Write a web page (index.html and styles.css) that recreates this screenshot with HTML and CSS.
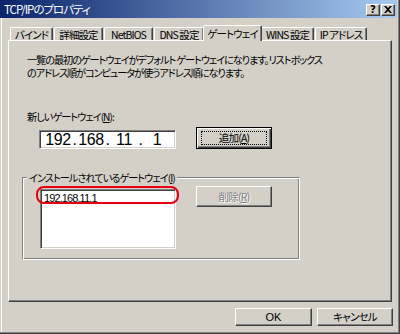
FILE: index.html
```html
<!DOCTYPE html>
<html lang="ja">
<head>
<meta charset="utf-8">
<link rel="stylesheet" href="styles.css">
</head>
<body>
<div class="window">
  <div class="titlebar">
    <span class="title">TCP/IPのプロパティ</span>
    <div class="tb-btns">
      <span class="tb-btn">?</span>
      <span class="tb-btn x">
        <svg width="8" height="7" viewBox="0 0 8 7"><path d="M0 0h2l2 2 2-2h2L5 3.5 8 7H6L4 5 2 7H0l3-3.5z" fill="#000"/></svg>
      </span>
    </div>
  </div>
  <div class="tabs">
    <div class="tab w1">バインド</div>
    <div class="tab w2">詳細設定</div>
    <div class="tab w3">NetBIOS</div>
    <div class="tab w4">DNS 設定</div>
    <div class="tab sel w5">ゲートウェイ</div>
    <div class="tab w6">WINS 設定</div>
    <div class="tab w7">IP アドレス</div>
  </div>
  <div class="panel">
    <p class="desc">一覧の最初のゲートウェイがデフォルト ゲートウェイになります。リストボックス</p>
    <p class="desc line2">のアドレス順がコンピュータが使うアドレス順になります。</p>
    <p class="label">新しいゲートウェイ(<u>N</u>):</p>
    <div class="row">
      <div class="ipbox">
        <span class="oct">192</span><span class="dot">.</span><span class="oct">168</span><span class="dot">.</span><span class="oct">11</span><span class="dot">.</span><span class="oct">1</span>
      </div>
      <div class="btn default add"><span class="focus">追加(<u>A</u>)</span></div>
    </div>
    <div class="group">
      <span class="legend">インストールされているゲートウェイ(<u>I</u>)</span>
      <div class="grow">
        <div class="listbox">
          <div class="item">192.168.11.1</div>
          <div class="mark"></div>
        </div>
        <div class="btn disabled del">削除(<u>R</u>)</div>
      </div>
    </div>
  </div>
  <div class="footer">
    <div class="btn ok">OK</div>
    <div class="btn cancel">キャンセル</div>
  </div>
</div>
</body>
</html>
```

FILE: styles.css
```css
* { box-sizing: border-box; }
html, body { margin: 0; padding: 0; }
body {
  width: 400px; height: 334px; overflow: hidden;
  background: #d4d0c8;
  font-family: "Noto Sans CJK JP", "Noto Sans", sans-serif;
  font-size: 10px;
  font-feature-settings: "palt";
  letter-spacing: -0.9px;
  color: #000;
}
u { text-decoration: underline; text-underline-offset: 1px; }
p { margin: 0; }

.window {
  width: 400px; height: 334px;
  background: #d4d0c8;
  box-shadow: inset -1px -1px #404040, inset -2px -2px #808080, inset 1px 0 #d4d0c8, inset 2px 0 #fff;
  display: flex; flex-direction: column;
}

.titlebar {
  height: 18px; width: 397px;
  background: linear-gradient(to right, #0a246a, #a6caf0);
  display: flex; align-items: center; justify-content: space-between;
  padding: 0 2px 0 4px;
}
.title { color: #fff; font-size: 11.5px; line-height: 14px; letter-spacing: -1px; }
.tb-btns { display: flex; gap: 1px; margin-top: 1px; }
.tb-btn {
  width: 14px; height: 12px;
  background: #d4d0c8;
  border: 1px solid; border-color: #fff #404040 #404040 #fff;
  box-shadow: inset -1px -1px #808080;
  font-family: "DejaVu Sans", sans-serif; font-weight: bold; font-size: 10px; line-height: 9px;
  letter-spacing: 0;
  display: flex; align-items: center; justify-content: center;
}

.tabs {
  height: 22px;
  display: flex; align-items: flex-end;
  padding-left: 10px;
}
.tab {
  height: 13px;
  margin-right: 1px;
  border: 1px solid; border-bottom: 0;
  border-color: #fff #404040 transparent #fff;
  border-radius: 2px 2px 0 0;
  box-shadow: inset -1px 0 #808080;
  font-size: 10.5px; line-height: 13px;
  text-align: center;
  letter-spacing: -0.9px;
  white-space: nowrap;
}
.tab.sel {
  position: relative; z-index: 1;
  height: 16px;
  margin: 0 -1px -1px -2px;
  background: #d4d0c8;
  padding-top: 1px;
}
.w1 { width: 43px; }
.w2 { width: 49px; }
.w3 { width: 49px; }
.w4 { width: 50px; }
.w5 { width: 59px; }
.w6 { width: 53px; }
.w7 { width: 52px; }

.panel {
  margin-left: 8px;
  width: 384px; height: 262px;
  border: 1px solid; border-color: #fff #404040 #404040 #fff;
  box-shadow: inset -1px -1px #808080;
}
.desc {
  margin: 12px 0 0 18px;
  height: 13px;
  font-size: 10.2px;
  line-height: 13px;
  letter-spacing: -1.1px;
  white-space: nowrap;
}
.desc.line2 { margin-top: 0; }
.label {
  margin: 31px 0 0 18px;
  font-size: 10.2px;
  line-height: 13px;
  letter-spacing: -1px;
}
.row {
  display: flex; align-items: flex-start;
  margin: 4px 0 0 30px;
  height: 22px;
}
.ipbox {
  width: 137px; height: 19px; margin-top: 3px;
  background: #fff;
  border: 1px solid; border-color: #808080 #fff #fff #808080;
  box-shadow: inset 1px 1px #404040, inset -1px -1px #d4d0c8;
  display: flex; align-items: center; padding-left: 4px;
  font-family: "Liberation Sans", sans-serif; font-size: 16px; line-height: 16px;
  letter-spacing: -0.4px;
}
.oct { width: 28px; text-align: center; }
.dot { width: 5px; text-align: center; }

.btn {
  background: #d4d0c8;
  border: 1px solid; border-color: #fff #404040 #404040 #fff;
  box-shadow: inset -1px -1px #808080;
  display: flex; align-items: center; justify-content: center;
  font-size: 10.5px; line-height: 12px; letter-spacing: -0.8px;
  white-space: nowrap;
}
.btn.default {
  border: 1px solid #000;
  box-shadow: inset 1px 1px #fff, inset -1px -1px #404040, inset -2px -2px #808080;
}
.focus {
  display: flex; align-items: center; justify-content: center;
  width: 66px; height: 14px;
  border: 1px dotted #000;
}
.add { width: 76px; height: 22px; margin-left: 20px; }

.group {
  position: relative;
  margin: 28px 0 0 13px;
  width: 278px; height: 83px;
  border: 1px solid; border-color: #808080 #fff #fff #808080;
  box-shadow: inset 1px 1px #fff, inset -1px -1px #808080;
}
.legend {
  position: absolute; left: 4px; top: -7px;
  background: #d4d0c8; padding: 0 2px;
  font-size: 10.2px;
  line-height: 13px; letter-spacing: -1px;
  white-space: nowrap;
}
.grow { display: flex; align-items: flex-start; padding: 0 0 0 17px; }
.listbox {
  position: relative;
  width: 136px; height: 60px; margin-top: 11px;
  background: #fff;
  border: 1px solid; border-color: #808080 #fff #fff #808080;
  box-shadow: inset 1px 1px #404040, inset -1px -1px #d4d0c8;
  padding: 2px 0 0 3px;
}
.item { line-height: 13px; letter-spacing: -0.9px; font-family: "Liberation Sans", sans-serif; font-size: 11px; }
.mark {
  position: absolute; left: -5px; top: -4px;
  width: 143px; height: 18px;
  border: 2px solid #e8000d; border-radius: 8px;
}
.del { width: 76px; height: 21px; margin: 8px 0 0 20px; color: #808080; text-shadow: 1px 1px #fff; }

.footer {
  display: flex; justify-content: flex-end; gap: 5px;
  margin-top: 6px; padding-right: 7px;
}
.ok { width: 77px; height: 18px; font-family: "Liberation Sans", sans-serif; font-size: 11px; letter-spacing: 0; }
.cancel { width: 76px; height: 18px; }
```
